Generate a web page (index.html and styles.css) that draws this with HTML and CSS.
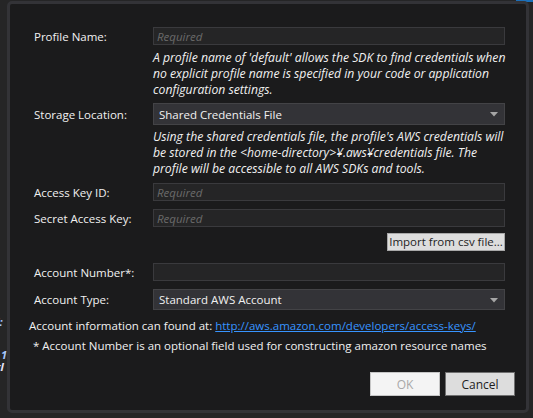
FILE: index.html
```html
<!DOCTYPE html>
<html>
<head>
<meta charset="utf-8">
<link rel="stylesheet" href="styles.css">
</head>
<body>
<div class="backdrop">
  <span class="bg-frag frag1">d:</span>
  <span class="bg-frag frag2">1</span>
  <span class="bg-frag frag3">tl</span>
  <span class="bg-accent"></span>
</div>
<div class="dialog">
  <div class="row first">
    <label class="lbl">Profile Name:</label>
    <input class="field" type="text" placeholder="Required">
  </div>
  <p class="help help1">A profile name of 'default' allows the SDK to find credentials when no explicit profile name is specified in your code or application configuration settings.</p>
  <div class="row">
    <label class="lbl">Storage Location:</label>
    <div class="combo combo-tall">
      <span>Shared Credentials File</span>
      <svg class="arrow" width="8" height="5" viewBox="0 0 8 5"><path d="M0 0H8L4 4.5Z" fill="#a6a6a6"/></svg>
    </div>
  </div>
  <p class="help help2">Using the shared credentials file, the profile's AWS credentials will be stored in the &lt;home-directory&gt;¥.aws¥credentials file. The profile will be accessible to all AWS SDKs and tools.</p>
  <div class="row r-access">
    <label class="lbl">Access Key ID:</label>
    <input class="field" type="text" placeholder="Required">
  </div>
  <div class="row r-secret">
    <label class="lbl">Secret Access Key:</label>
    <input class="field" type="text" placeholder="Required">
  </div>
  <div class="row r-import">
    <span class="lbl"></span>
    <div class="import-wrap"><button class="btn-import">Import from csv file...</button></div>
  </div>
  <div class="row r-accnum">
    <label class="lbl">Account Number*:</label>
    <input class="field" type="text">
  </div>
  <div class="row r-acctype">
    <label class="lbl">Account Type:</label>
    <div class="combo">
      <span>Standard AWS Account</span>
      <svg class="arrow" width="8" height="5" viewBox="0 0 8 5"><path d="M0 0H8L4 4.5Z" fill="#a6a6a6"/></svg>
    </div>
  </div>
  <p class="info">Account information can found at: <a href="#">http://aws.amazon.com/developers/access-keys/</a></p>
  <p class="note">* Account Number is an optional field used for constructing amazon resource names</p>
  <div class="actions">
    <button class="btn btn-ok" disabled>OK</button>
    <button class="btn btn-cancel">Cancel</button>
  </div>
</div>
</body>
</html>
```
FILE: styles.css
```css
html, body {
  margin: 0;
  padding: 0;
}
body {
  width: 533px;
  height: 418px;
  background: #252526;
  font-family: "Open Sans", "Noto Sans", sans-serif;
  font-size: 11.5px;
  color: #f1f1f1;
  position: relative;
  overflow: hidden;
}
.backdrop {
  position: absolute;
  inset: 0;
}
.bg-frag {
  position: absolute;
  font-style: italic;
  font-weight: bold;
  font-size: 11px;
  line-height: 11px;
  color: #e8e8ff;
}
.frag1 { left: -7px; top: 316px; color: #a9c8ff; }
.frag2 { left: 1px; top: 349px; color: #a9c8ff; }
.frag3 { left: -4px; top: 361px; }
.bg-accent {
  position: absolute;
  right: 0;
  top: 0;
  width: 17px;
  height: 2px;
  background: #1c6fb8;
}
.dialog {
  position: relative;
  margin: 1px 0 0 7px;
  width: 522px;
  height: 412px;
  box-sizing: border-box;
  background: #1b1b1c;
  border: 3px solid #333337;
  border-radius: 5px;
  padding: 23px 21px 0 24px;
}
.row {
  display: flex;
  align-items: center;
}
.lbl {
  width: 119px;
  flex: none;
  color: #f1f1f1;
}
.field {
  width: 352px;
  height: 18px;
  box-sizing: border-box;
  margin: 0;
  padding: 0 3px;
  background: #252526;
  border: 1px solid #3a3a3d;
  color: #f1f1f1;
  font-family: inherit;
  font-size: 11.5px;
  outline: none;
}
.field::placeholder {
  color: #6a6a6a;
  font-style: italic;
}
.help {
  margin: 5px 0 5px 119px;
  font-style: italic;
  font-size: 12.2px;
  line-height: 16px;
  color: #f1f1f1;
  width: 354px;
}
.help2 {
  margin: 4px 0 6px 119px;
  line-height: 16px;
}
.combo {
  width: 352px;
  height: 21px;
  box-sizing: border-box;
  background: #333337;
  border: 1px solid #434346;
  display: flex;
  align-items: center;
  justify-content: space-between;
  padding: 0 6px 0 5px;
}
.combo-tall { height: 22px; }
.arrow { display: block; margin-top: 1px; }
.r-secret { margin-top: 8px; }
.r-import { margin-top: 6px; }
.import-wrap {
  width: 352px;
  display: flex;
  justify-content: flex-end;
}
.btn-import {
  height: 18px;
  width: 118px;
  margin: 0;
  padding: 0;
  box-sizing: border-box;
  background: #dddddd;
  border: 1px solid #a8a8a8;
  color: #1e1e1e;
  font-family: inherit;
  font-size: 11.5px;
  line-height: 16px;
}
.r-accnum { margin-top: 12px; }
.r-acctype { margin-top: 8px; }
.info {
  margin: 8px 0 0 -5px;
  line-height: 16px;
}
.info a {
  color: #3794ff;
  text-decoration: underline;
}
.note {
  margin: 4px 0 0 -1px;
  line-height: 16px;
}
.actions {
  display: flex;
  justify-content: flex-end;
  gap: 5px;
  margin: 18px -10px 0 0;
}
.btn {
  width: 70px;
  height: 24px;
  box-sizing: border-box;
  margin: 0;
  font-family: inherit;
  font-size: 12px;
}
.btn-ok {
  background: #f4f4f4;
  border: 1px solid #c6c6c6;
  color: #a8a8a8;
}
.btn-cancel {
  background: #dddddd;
  border: 1px solid #707070;
  color: #1e1e1e;
}
```
